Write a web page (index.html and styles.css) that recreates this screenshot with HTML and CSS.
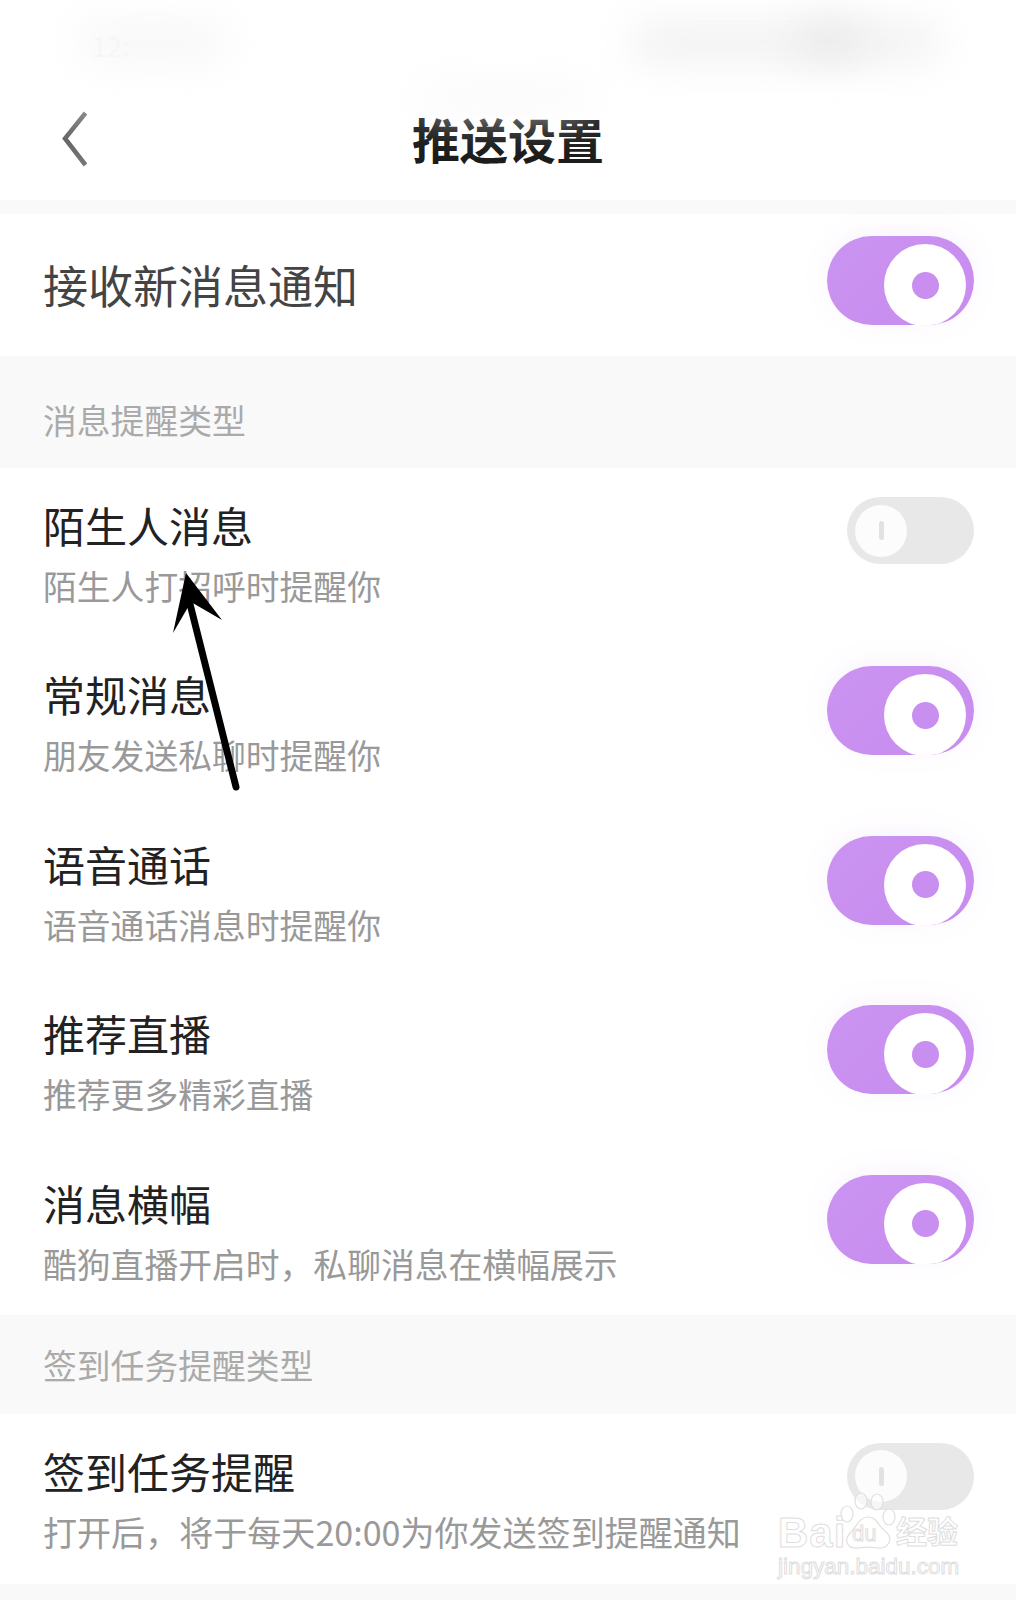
FILE: index.html
```html
<!DOCTYPE html>
<html lang="zh-CN">
<head>
    <meta charset="UTF-8">
    <meta name="viewport" content="width=device-width, initial-scale=1.0">
    <title>推送设置</title>
    <link rel="stylesheet" href="styles.css">
</head>
<body>
    <div class="page">
        <header class="top-bar">
            <svg class="back-icon" width="26" height="56" viewBox="0 0 26 56">
                <defs>
                    <linearGradient id="backFade" x1="0" y1="0" x2="0" y2="1">
                        <stop offset="0" stop-color="#8a8a8a"/>
                        <stop offset="0.5" stop-color="#666"/>
                        <stop offset="1" stop-color="#777"/>
                    </linearGradient>
                </defs>
                <path d="M23.5 2 L3 27.5 L23.5 54" fill="none" stroke="url(#backFade)" stroke-width="4.5"/>
            </svg>
            <h1 class="page-title">推送设置</h1>
        </header>

        <div class="gap-band"></div>

        <div class="row row-main">
            <span class="main-label">接收新消息通知</span>
            <div class="switch switch-on"><span class="knob"></span></div>
        </div>

        <div class="section-head section-first">消息提醒类型</div>

        <div class="row">
            <div class="row-text">
                <div class="row-title">陌生人消息</div>
                <div class="row-sub">陌生人打招呼时提醒你</div>
            </div>
            <div class="switch switch-off"><span class="knob"></span></div>
        </div>
        <div class="row">
            <div class="row-text">
                <div class="row-title">常规消息</div>
                <div class="row-sub">朋友发送私聊时提醒你</div>
            </div>
            <div class="switch switch-on"><span class="knob"></span></div>
        </div>
        <div class="row">
            <div class="row-text">
                <div class="row-title">语音通话</div>
                <div class="row-sub">语音通话消息时提醒你</div>
            </div>
            <div class="switch switch-on"><span class="knob"></span></div>
        </div>
        <div class="row">
            <div class="row-text">
                <div class="row-title">推荐直播</div>
                <div class="row-sub">推荐更多精彩直播</div>
            </div>
            <div class="switch switch-on"><span class="knob"></span></div>
        </div>
        <div class="row">
            <div class="row-text">
                <div class="row-title">消息横幅</div>
                <div class="row-sub">酷狗直播开启时，私聊消息在横幅展示</div>
            </div>
            <div class="switch switch-on"><span class="knob"></span></div>
        </div>

        <div class="section-head section-second">签到任务提醒类型</div>

        <div class="row row-last">
            <div class="row-text">
                <div class="row-title">签到任务提醒</div>
                <div class="row-sub row-sub-long">打开后，将于每天20:00为你发送签到提醒通知</div>
            </div>
            <div class="switch switch-off"><span class="knob"></span></div>
        </div>

        <div class="bottom-band"></div>

        <!-- blurred status bar -->
        <span class="status-time">12:</span>
        <span class="smudge smudge-time"></span>
        <span class="smudge smudge-icons"></span>
        <span class="smudge smudge-battery"></span>
        <span class="smudge smudge-head"></span>

        <!-- annotation arrow -->
        <svg class="arrow" width="70" height="232" viewBox="0 0 70 232">
            <path d="M15 3 L2 63 L20 32 L51 50 Z" fill="#000"/>
            <path d="M17 26 L65 217" fill="none" stroke="#000" stroke-width="7" stroke-linecap="round"/>
        </svg>

        <!-- watermark -->
        <div class="watermark">
            <div class="mark-line">
                <span class="mark-bai">Bai</span>
                <svg class="mark-paw" width="56" height="60" viewBox="0 0 56 60">
                    <g fill="rgba(255,255,255,.6)" stroke="#e0e0e0" stroke-width="1.2">
                        <ellipse cx="7" cy="22" rx="6" ry="8"/>
                        <ellipse cx="21" cy="9" rx="6" ry="8"/>
                        <ellipse cx="37" cy="10" rx="6" ry="8"/>
                        <ellipse cx="49" cy="25" rx="6" ry="8"/>
                        <path d="M28 25 C37 25 38 34 46 40 C54 47 48 57 38 56 C32 55 24 55 18 56 C8 57 3 49 10 41 C17 35 19 25 28 25 Z"/>
                    </g>
                </svg>
                <span class="mark-du">du</span>
                <span class="mark-cn">经验</span>
            </div>
            <div class="mark-url">jingyan.baidu.com</div>
        </div>
    </div>
</body>
</html>
```

FILE: styles.css
```css
body {
    margin: 0;
    background-color: #fff;
    font-family: "Noto Sans CJK SC", "Noto Sans", sans-serif;
}
.page {
    position: relative;
    width: 1016px;
    height: 1600px;
    overflow: hidden;
    background-color: #fff;
}

/* header */
.top-bar {
    height: 200px;
    box-sizing: border-box;
    padding-top: 111px;
    position: relative;
}
.back-icon {
    display: block;
    margin-left: 62px;
}
.page-title {
    position: absolute;
    left: 0;
    right: 0;
    top: 104px;
    margin: 0;
    text-align: center;
    font-size: 48px;
    line-height: 68px;
    font-weight: 700;
    color: #1c1c1c;
}
.gap-band {
    height: 14px;
    background-color: #f9f9f9;
}

/* rows */
.row {
    height: 169.4px;
    box-sizing: border-box;
    padding: 29px 42px 0 43px;
    display: flex;
    justify-content: space-between;
    align-items: flex-start;
}
.row-main {
    height: 142px;
    padding-top: 22px;
}
.main-label {
    font-size: 45px;
    line-height: 64px;
    margin-top: 17px;
    color: #444;
}
.row-text {
    margin-top: -2px;
}
.row-title {
    font-size: 42px;
    line-height: 60px;
    color: #222;
}
.row-sub {
    font-size: 33.8px;
    line-height: 48px;
    margin-top: 7px;
    color: #999;
}
.row-sub-long {
    font-size: 34.05px;
}
.row-last {
    height: 170px;
}

/* section headers */
.section-head {
    background-color: #f9f9f9;
    box-sizing: border-box;
    padding-left: 43px;
    font-size: 33.8px;
    line-height: 48px;
    color: #aaa;
}
.section-first {
    height: 112px;
    padding-top: 40px;
}
.section-second {
    height: 99px;
    padding-top: 26px;
}
.bottom-band {
    height: 16px;
    background-color: #f9f9f9;
}

/* switches */
.switch {
    display: flex;
    box-sizing: border-box;
    flex-shrink: 0;
    overflow: hidden;
}
.switch-on {
    width: 147px;
    height: 89px;
    border-radius: 45px;
    padding-right: 8px;
    justify-content: flex-end;
    align-items: flex-end;
    background: linear-gradient(135deg, #ca93f1, #c88cef);
    box-shadow: 0 -4px 26px rgba(200, 142, 240, .1);
}
.switch-on .knob {
    width: 82px;
    height: 82px;
    margin-bottom: -1px;
    background-color: #fff;
    border-radius: 50%;
    display: flex;
    align-items: center;
    justify-content: center;
}
.switch-on .knob::after {
    content: "";
    width: 27px;
    height: 27px;
    border-radius: 50%;
    background-color: #c88ef0;
}
.switch-off {
    width: 127px;
    height: 67px;
    border-radius: 34px;
    padding-left: 8px;
    align-items: center;
    background-color: #e8e8e8;
}
.switch-off .knob {
    width: 52px;
    height: 52px;
    background-color: #fcfcfc;
    border-radius: 50%;
    display: flex;
    align-items: center;
    justify-content: center;
}
.switch-off .knob::after {
    content: "";
    width: 5px;
    height: 19px;
    border-radius: 3px;
    background-color: #e2e2e2;
}

/* blurred bits over the status bar */
.status-time {
    position: absolute;
    left: 92px;
    top: 31px;
    font-size: 27px;
    line-height: 30px;
    color: #f6f6f6;
}
.smudge {
    position: absolute;
    border-radius: 30px;
    filter: blur(20px);
}
.smudge-time {
    left: 78px;
    top: 24px;
    width: 150px;
    height: 36px;
    background-color: #f6f6f6;
}
.smudge-icons {
    left: 630px;
    top: 24px;
    width: 310px;
    height: 36px;
    background-color: #f0f0f0;
}
.smudge-battery {
    left: 800px;
    top: 26px;
    width: 60px;
    height: 30px;
    background-color: #e6e6e6;
}
.smudge-head {
    left: 420px;
    top: 84px;
    width: 170px;
    height: 26px;
    background-color: #f9f9f9;
}

/* annotation */
.arrow {
    position: absolute;
    left: 171px;
    top: 570px;
}

/* watermark */
.watermark {
    position: absolute;
    left: 778px;
    top: 1492px;
    width: 190px;
    color: rgba(255, 255, 255, .75);
    -webkit-text-stroke: 1px #dedede;
}
.mark-line {
    position: relative;
    height: 60px;
    display: flex;
    align-items: flex-end;
}
.mark-bai {
    font-family: "Liberation Sans", sans-serif;
    font-weight: 700;
    font-size: 42px;
    line-height: 50px;
    letter-spacing: 1px;
    width: 62px;
    margin-bottom: -6px;
}
.mark-paw {
    display: block;
    flex-shrink: 0;
}
.mark-du {
    position: absolute;
    left: 74px;
    bottom: 6px;
    font-family: "Liberation Sans", sans-serif;
    font-size: 22px;
    line-height: 24px;
}
.mark-cn {
    font-size: 31px;
    line-height: 44px;
    font-weight: 700;
}
.mark-url {
    font-family: "Liberation Sans", sans-serif;
    font-size: 22.5px;
    line-height: 26px;
    margin-top: 2px;
    white-space: nowrap;
}
```
